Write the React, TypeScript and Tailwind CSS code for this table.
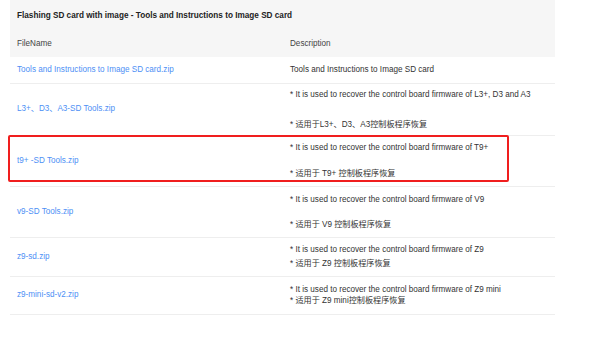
import React from "react";

type Row = {
  file: string;
  lines: string[];
  h: string;
  gap: string;
  boxed?: boolean;
};

const rows: Row[] = [
  { file: "Tools and Instructions to Image SD card.zip", lines: ["Tools and Instructions to Image SD card"], h: "h-[27px]", gap: "gap-0" },
  {
    file: "L3+、D3、A3-SD Tools.zip",
    lines: ["* It is used to recover the control board firmware of L3+, D3 and A3", "* 适用于L3+、D3、A3控制板程序恢复"],
    h: "h-[52px]",
    gap: "gap-[20px]",
  },
  {
    file: "t9+ -SD Tools.zip",
    lines: ["* It is used to recover the control board firmware of T9+", "* 适用于 T9+ 控制板程序恢复"],
    h: "h-[51px]",
    gap: "gap-[16px]",
    boxed: true,
  },
  {
    file: "v9-SD Tools.zip",
    lines: ["* It is used to recover the control board firmware of V9", "* 适用于 V9 控制板程序恢复"],
    h: "h-[51px]",
    gap: "gap-[15px]",
  },
  {
    file: "z9-sd.zip",
    lines: ["* It is used to recover the control board firmware of Z9", "* 适用于 Z9 控制板程序恢复"],
    h: "h-[39px]",
    gap: "gap-[4px]",
  },
  {
    file: "z9-mini-sd-v2.zip",
    lines: ["* It is used to recover the control board firmware of Z9 mini", "* 适用于 Z9 mini控制板程序恢复"],
    h: "h-[38px]",
    gap: "gap-[1px]",
  },
];

export default function App() {
  return (
    <div className="h-[338px] w-[600px] bg-white font-['Liberation_Sans','Noto_Sans_CJK_SC',sans-serif] text-[8.15px] text-[#333]">
      <div className="ml-[10px] w-[545px]">
        <div className="bg-[#f6f6f6]">
          <div className="flex h-[31px] items-center pl-[7px] pt-[1px] text-[8.2px] font-bold text-[#222]">
            Flashing SD card with image - Tools and Instructions to Image SD card
          </div>
          <div className="flex h-[26px] items-center pt-[1px] text-[#444]">
            <div className="w-[280px] pl-[7px]">FileName</div>
            <div>Description</div>
          </div>
        </div>
        {rows.map((r) => (
          <div key={r.file} className={`relative flex items-center border-b border-[#eeeeee] ${r.h}`}>
            <div className="w-[280px] pl-[7px] text-[#4d8ff5]">{r.file}</div>
            <div className={`flex flex-col ${r.gap}`}>
              {r.lines.map((l) => (
                <div key={l} className="leading-[10px]">
                  {l}
                </div>
              ))}
            </div>
            {r.boxed && (
              <div className="absolute left-[-2px] top-[-1px] h-[47px] w-[501px] rounded-[2px] border-2 border-[#f01e1e]" />
            )}
          </div>
        ))}
      </div>
    </div>
  );
}
